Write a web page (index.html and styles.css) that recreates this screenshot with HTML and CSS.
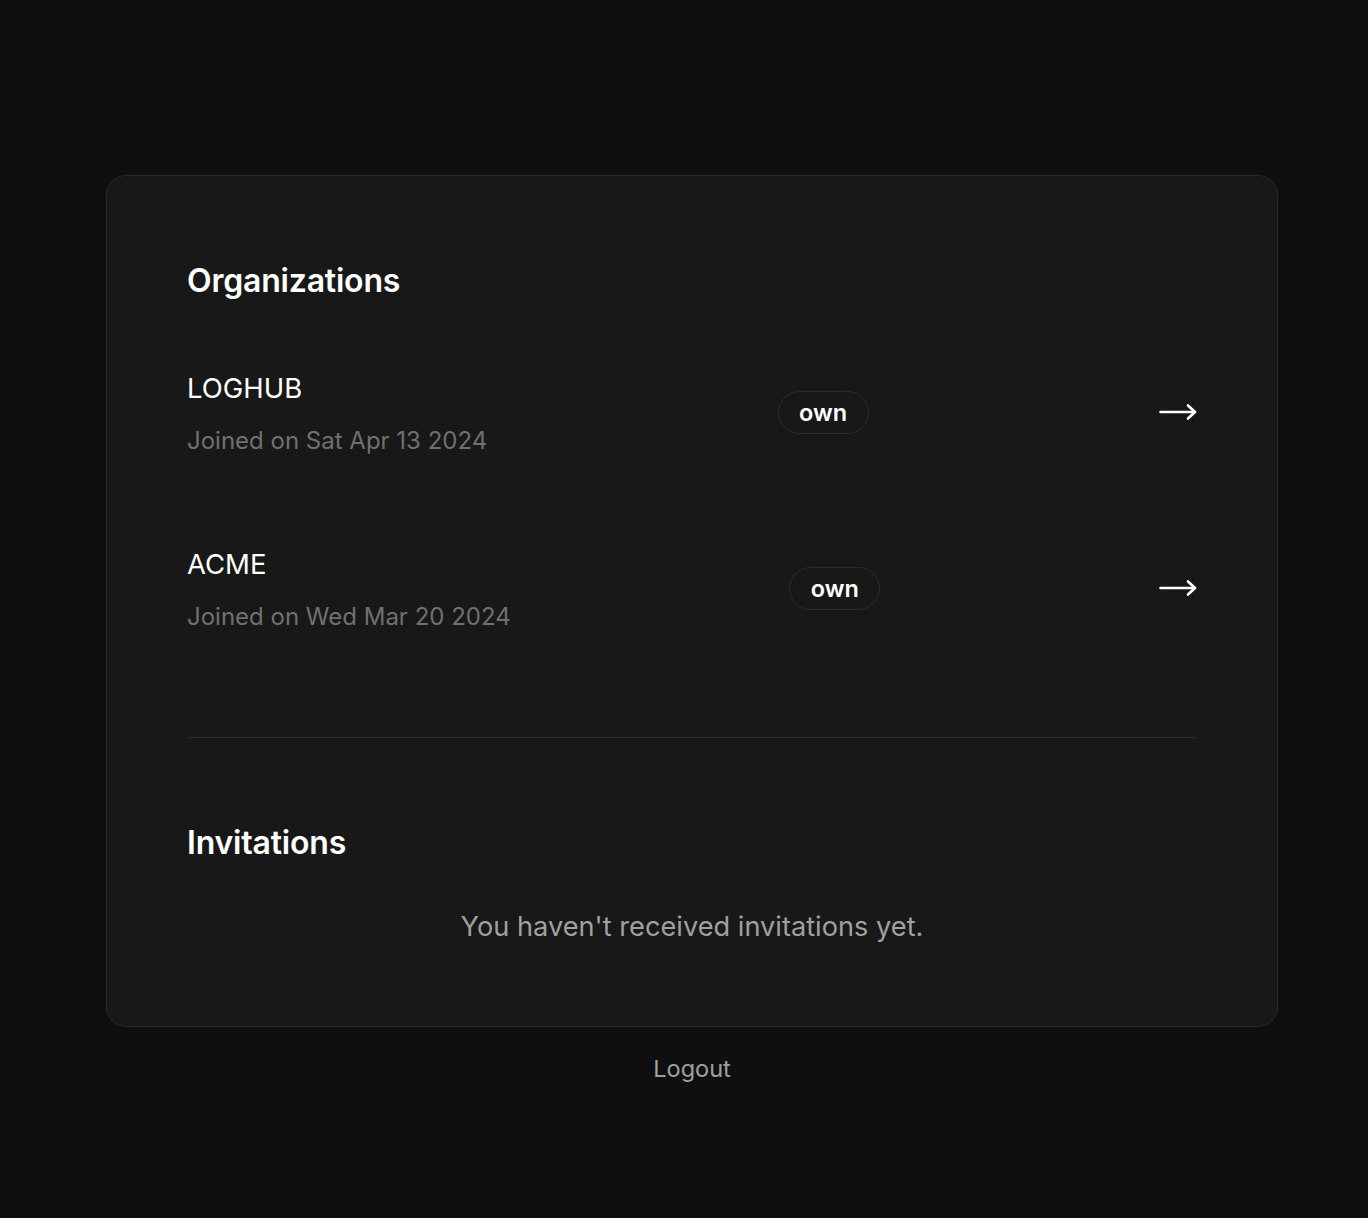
FILE: index.html
```html
<!DOCTYPE html>
<html lang="en">
<head>
<meta charset="utf-8">
<title>Organizations</title>
<link rel="stylesheet" href="styles.css">
</head>
<body>
<main class="page">
  <section class="card">
    <h2 class="title">Organizations</h2>
    <ul class="orgs">
      <li class="org">
        <div class="org-info">
          <div class="org-name">LOGHUB</div>
          <div class="org-date">Joined on Sat Apr 13 2024</div>
        </div>
        <span class="badge">own</span>
        <a class="go" href="#" aria-label="Open LOGHUB">
          <svg width="38" height="18" viewBox="0 0 38 18" fill="none" stroke="#fff" stroke-width="2.6" stroke-linecap="round" stroke-linejoin="round"><path d="M1.5 9H36"/><path d="M29 2.5L36 9L29 15.5"/></svg>
        </a>
      </li>
      <li class="org">
        <div class="org-info">
          <div class="org-name">ACME</div>
          <div class="org-date">Joined on Wed Mar 20 2024</div>
        </div>
        <span class="badge">own</span>
        <a class="go" href="#" aria-label="Open ACME">
          <svg width="38" height="18" viewBox="0 0 38 18" fill="none" stroke="#fff" stroke-width="2.6" stroke-linecap="round" stroke-linejoin="round"><path d="M1.5 9H36"/><path d="M29 2.5L36 9L29 15.5"/></svg>
        </a>
      </li>
    </ul>
    <hr class="divider">
    <h2 class="title title-inv">Invitations</h2>
    <p class="empty">You haven't received invitations yet.</p>
  </section>
  <a class="logout" href="#">Logout</a>
</main>
</body>
</html>
```
FILE: styles.css
```css
* { box-sizing: border-box; }
html, body {
  margin: 0;
  padding: 0;
  background: #0f0f0f;
  font-family: Inter, "Noto Sans", sans-serif;
  color: #fff;
}
.page {
  padding: 175px 0 0 16px;
  display: flex;
  flex-direction: column;
  align-items: center;
  min-height: 1218px;
}
.card {
  width: 1172px;
  background: #181818;
  border: 1px solid #2a2a2a;
  border-radius: 20px;
  padding: 87px 80px 83px;
}
.title {
  margin: 0;
  font-size: 32px;
  line-height: 36px;
  font-weight: 600;
  letter-spacing: -0.2px;
}
.orgs {
  list-style: none;
  margin: 27px 0 0;
  padding: 0;
}
.org {
  display: flex;
  justify-content: space-between;
  align-items: center;
  padding: 46px 0;
}
.org-name {
  font-size: 27.5px;
  line-height: 32px;
  font-weight: 400;
}
.org-date {
  margin-top: 22px;
  font-size: 24px;
  line-height: 30px;
  color: #707070;
}
.badge {
  display: inline-flex;
  align-items: center;
  justify-content: center;
  width: 91px;
  height: 43px;
  margin-bottom: 4px;
  border: 1.5px solid #2c2c2c;
  border-radius: 22px;
  font-size: 23.5px;
  font-weight: 600;
}
.go {
  display: flex;
  width: 38px;
  height: 18px;
  margin-bottom: 4px;
}
.divider {
  margin: 59px 0 0;
  border: 0;
  border-top: 1.5px solid #2c2c2c;
}
.title-inv {
  margin-top: 87px;
}
.empty {
  margin: 49px 0 0;
  text-align: center;
  font-size: 27.2px;
  line-height: 33px;
  color: #a0a0a0;
}
.logout {
  margin-top: 28px;
  font-size: 23.5px;
  line-height: 28px;
  color: #a0a0a0;
  text-decoration: none;
}
```
